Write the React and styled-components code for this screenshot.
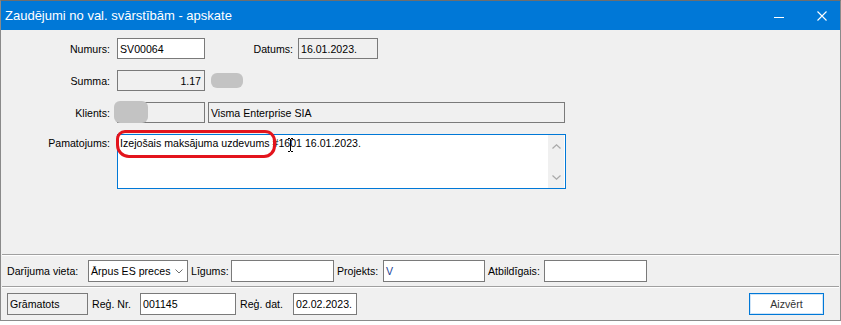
import React from 'react';
import styled, { createGlobalStyle } from 'styled-components';

const Global = createGlobalStyle`
  html, body { margin: 0; padding: 0; background: #ffffff; }
  body {
    font-family: "Liberation Sans", Arial, sans-serif;
    font-size: 10.6px;
    color: #000;
  }
  * { box-sizing: border-box; }
`;

const Window = styled.div`
  width: 841px;
  height: 321px;
  border: 1px solid #8a8a8a;
  border-top-color: #6e6e6e;
  display: flex;
  flex-direction: column;
  background: #f0f0f0;
`;

const TitleBar = styled.div`
  height: 29px;
  flex-shrink: 0;
  background: #0078d7;
  color: #fff;
  display: flex;
  align-items: center;
  padding-left: 4px;
`;

const Title = styled.div`
  flex: 1;
  font-size: 13px;
  white-space: nowrap;
`;

const WinControls = styled.div`
  display: flex;
  align-items: center;
  gap: 33px;
  padding-right: 13px;
`;

const Body = styled.div`
  flex: 1;
  display: flex;
  flex-direction: column;
`;

const Form = styled.div`
  flex: 1;
  display: flex;
  flex-direction: column;
  gap: 11px;
  padding-top: 8px;
`;

const Row = styled.div`
  display: flex;
  align-items: ${p => (p.$top ? 'flex-start' : 'center')};
  min-height: 21px;
`;

const Label = styled.div`
  width: ${p => p.$w}px;
  margin-left: ${p => p.$ml || 0}px;
  margin-right: ${p => p.$mr || 0}px;
  padding-top: ${p => p.$pt || 0}px;
  text-align: ${p => (p.$left ? 'left' : 'right')};
  white-space: nowrap;
  flex-shrink: 0;
`;

const Field = styled.div`
  position: relative;
  width: ${p => p.$w}px;
  height: ${p => p.$h || 21}px;
  margin-left: ${p => p.$ml || 0}px;
  flex-shrink: 0;
  border: 1px solid #7a7a7a;
  background: ${p => (p.$ro ? '#f0f0f0' : '#ffffff')};
  color: ${p => p.$color || '#000'};
  display: flex;
  align-items: center;
  justify-content: ${p => (p.$right ? 'flex-end' : 'flex-start')};
  padding: 0 3px 0 2px;
  white-space: nowrap;
  overflow: visible;
`;

const Blob = styled.div`
  width: ${p => p.$w}px;
  height: ${p => p.$h}px;
  margin-left: ${p => p.$ml || 0}px;
  border-radius: 6px;
  background: #c3c3c3;
  flex-shrink: 0;
`;

const CoverBlob = styled(Blob)`
  position: absolute;
  left: -4px;
  top: -2px;
  margin: 0;
`;

const MemoWrap = styled.div`
  position: relative;
  margin-left: 7px;
`;

const Memo = styled.div`
  width: 449px;
  height: 55px;
  border: 1px solid #0078d7;
  background: #fff;
  display: flex;
`;

const MemoText = styled.div`
  flex: 1;
  padding: 2px 2px 0 2px;
  line-height: 13px;
  white-space: nowrap;
`;

const CaretAnchor = styled.span`
  position: relative;
  display: inline-block;
  width: 0;
  height: 13px;
  vertical-align: top;
`;

const Cursor = styled.svg`
  position: absolute;
  left: -3px;
  top: 1px;
`;

const ScrollBar = styled.div`
  width: 16px;
  margin: 0 1px 0 0;
  background: #f0f0f0;
  display: flex;
  flex-direction: column;
  justify-content: space-between;
  align-items: center;
  padding: 9px 0 8px;
`;

const Annotation = styled.div`
  position: absolute;
  left: -1px;
  top: -4px;
  width: 160px;
  height: 28px;
  border: 3px solid #e3141c;
  border-radius: 9px 11px 12px 13px;
  pointer-events: none;
`;

const Separator = styled.div`
  height: 2px;
  margin: 0 1px;
  border-top: 1px solid #a0a0a0;
  border-bottom: 1px solid #ffffff;
  flex-shrink: 0;
`;

const Bar = styled.div`
  display: flex;
  align-items: center;
  height: ${p => p.$h}px;
  gap: ${p => p.$gap}px;
  padding: 0 ${p => p.$pr || 0}px 0 6px;
  flex-shrink: 0;
`;

const Select = styled.div`
  width: 100px;
  height: 22px;
  border: 1px solid #7a7a7a;
  background: #fff;
  display: flex;
  align-items: center;
  justify-content: space-between;
  padding: 0 4px 0 2px;
  flex-shrink: 0;
`;

const Button = styled.div`
  width: 75px;
  height: 22px;
  margin-left: auto;
  border: 1px solid #0078d7;
  box-shadow: inset 0 0 0 1px #cfe4f7;
  background: #ffffff;
  color: #333;
  display: flex;
  align-items: center;
  justify-content: center;
  flex-shrink: 0;
`;

const Chevron = ({ up }) => (
  <svg width="9" height="5" viewBox="0 0 9 5">
    <path
      d={up ? 'M0.5 4.5 L4.5 0.8 L8.5 4.5' : 'M0.5 0.5 L4.5 4.2 L8.5 0.5'}
      fill="none"
      stroke={'#a9a9a9'}
      strokeWidth="1.2"
    />
  </svg>
);

export default function App() {
  return (
    <>
      <Global />
      <Window>
        <TitleBar>
          <Title>Zaudējumi no val. svārstībām - apskate</Title>
          <WinControls>
            <svg width="10" height="10" viewBox="0 0 10 10">
              <path d="M0 6.5 H10" stroke="#fff" strokeWidth="1" />
            </svg>
            <svg width="10" height="10" viewBox="0 0 10 10">
              <path d="M0.5 0.5 L9.5 9.5 M9.5 0.5 L0.5 9.5" stroke="#fff" strokeWidth="1.1" />
            </svg>
          </WinControls>
        </TitleBar>
        <Body>
          <Form>
            <Row>
              <Label $w={109} $mr={7}>Numurs:</Label>
              <Field $w={88}>SV00064</Field>
              <Label $w={88}>Datums:</Label>
              <Field $w={80} $ml={5} $ro>16.01.2023.</Field>
            </Row>
            <Row>
              <Label $w={109} $mr={7}>Summa:</Label>
              <Field $w={88} $ro $right>1.17</Field>
              <Blob $w={32} $h={15} $ml={6} />
            </Row>
            <Row>
              <Label $w={109} $mr={7}>Klients:</Label>
              <Field $w={88} $ro>
                <CoverBlob $w={34} $h={22} />
              </Field>
              <Field $w={357} $ml={3} $ro>Visma Enterprise SIA</Field>
            </Row>
            <Row $top>
              <Label $w={109} $pt={3}>Pamatojums:</Label>
              <MemoWrap>
                <Memo>
                  <MemoText>
                    Izejošais maksājuma uzdevums #16
                    <CaretAnchor>
                      <Cursor width="7" height="14" viewBox="0 0 7 14">
                        <path d="M1 0.5 H3 M4 0.5 H6 M3.5 1 V13 M1 13.5 H3 M4 13.5 H6" stroke="#000" strokeWidth="1" fill="none" />
                      </Cursor>
                    </CaretAnchor>
                    01 16.01.2023.
                  </MemoText>
                  <ScrollBar>
                    <Chevron up />
                    <Chevron />
                  </ScrollBar>
                </Memo>
                <Annotation />
              </MemoWrap>
            </Row>
          </Form>
          <Separator />
          <Bar $h={30} $gap={3}>
            <Label $w={78} $left>Darījuma vieta:</Label>
            <Select>
              <span>Ārpus ES preces</span>
              <svg width="8" height="5" viewBox="0 0 8 5">
                <path d="M0.5 0.5 L4 4 L7.5 0.5" fill="none" stroke="#707070" strokeWidth="1" />
              </svg>
            </Select>
            <Label $w={37} $left>Līgums:</Label>
            <Field $w={103} $h={22} />
            <Label $w={43} $left>Projekts:</Label>
            <Field $w={102} $h={22} $color="#1c3f94">V</Field>
            <Label $w={53} $left>Atbildīgais:</Label>
            <Field $w={103} $h={22} />
          </Bar>
          <Separator />
          <Bar $h={32} $gap={4} $pr={16}>
            <Field $w={81} $h={22} $ro>Grāmatots</Field>
            <Label $w={44} $left>Reģ. Nr.</Label>
            <Field $w={96} $h={22}>001145</Field>
            <Label $w={49} $left>Reģ. dat.</Label>
            <Field $w={64} $h={22}>02.02.2023.</Field>
            <Button>Aizvērt</Button>
          </Bar>
        </Body>
      </Window>
    </>
  );
}
